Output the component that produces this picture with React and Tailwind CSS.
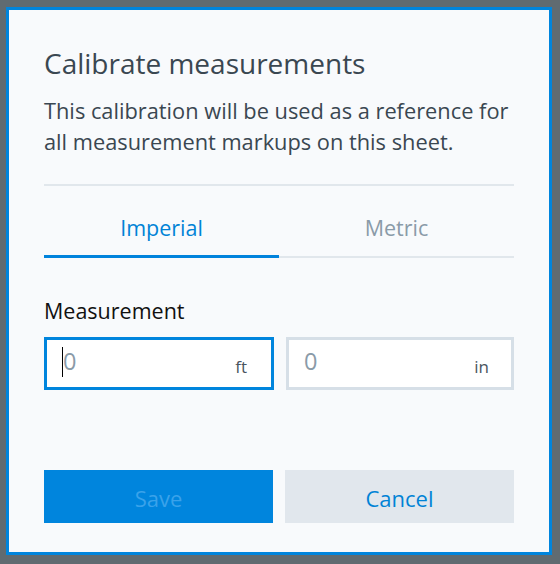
export default function App() {
  return (
    <div
      className="w-[560px] h-[564px] bg-[#606b71] pt-[7px] pl-[6px] overflow-hidden"
      style={{ fontFamily: '"Open Sans", "Noto Sans", sans-serif' }}
    >
      <div className="w-[546px] h-[548px] border-[3px] border-[#0085dd] bg-[#f8fafc] px-[35px] pt-[35px]">
        <h1 className="text-[28px] leading-[36px] text-[#3a4751]">Calibrate measurements</h1>
        <p className="mt-[14px] text-[21.8px] leading-[31px] text-[#3a4751]">
          This calibration will be used as a reference for all measurement markups on this sheet.
        </p>

        <div className="mt-[27px] h-[2px] bg-[#e1e7ec]" />

        {/* unit tabs */}
        <div className="mt-[15px] flex">
          <button className="flex-1 flex flex-col items-center">
            <span className="h-[54px] flex items-center text-[21.5px] text-[#0083d6]">Imperial</span>
            <span className="w-full h-[3px] bg-[#0083dc]" />
          </button>
          <button className="flex-1 flex flex-col items-center">
            <span className="h-[54px] flex items-center text-[21.5px] text-[#8a9ba8]">Metric</span>
            <span className="w-full h-[3px] flex flex-col justify-end">
              <span className="h-[2px] bg-[#e1e7ec]" />
            </span>
          </button>
        </div>

        <div className="mt-[39px] text-[21.5px] leading-[28px] text-[#111]">Measurement</div>

        <div className="mt-[12px] flex gap-[12px]">
          <div className="flex-1 h-[53px] border-[3px] border-[#0085dd] bg-white flex items-start pl-[15px] pr-[24px]">
            <span className="mt-[7px] w-px h-[30px] bg-black" />
            <span className="mt-[6px] text-[23.5px] leading-[30px] text-[#8a9ba8]">0</span>
            <span className="ml-auto mt-[15px] text-[17px] leading-[24px] text-[#4a5560]">ft</span>
          </div>
          <div className="flex-1 h-[53px] border-[3px] border-[#d6dfe7] bg-white flex items-start pl-[15px] pr-[22px]">
            <span className="mt-[6px] text-[23.5px] leading-[30px] text-[#8a9ba8]">0</span>
            <span className="ml-auto mt-[15px] text-[17px] leading-[24px] text-[#4a5560]">in</span>
          </div>
        </div>

        <div className="mt-[80px] flex gap-[12px]">
          <button className="flex-1 h-[53px] pt-[3px] bg-[#0085dd] text-[22px] text-[#3aa2ea]">Save</button>
          <button className="flex-1 h-[53px] pt-[3px] bg-[#e1e7ed] text-[22px] text-[#0083d6]">Cancel</button>
        </div>
      </div>
    </div>
  )
}
